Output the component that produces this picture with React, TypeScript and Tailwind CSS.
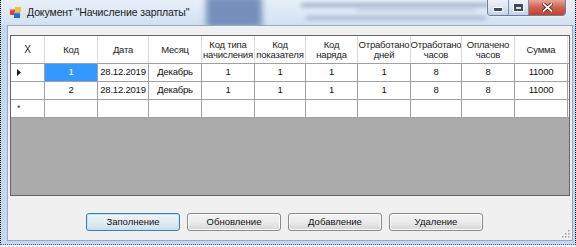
import React from "react";

type Col = { w: number; h: string[]; v: string[] };

const cols: Col[] = [
  { w: 53, h: ["Код"], v: ["1", "2"] },
  { w: 51, h: ["Дата"], v: ["28.12.2019", "28.12.2019"] },
  { w: 53, h: ["Месяц"], v: ["Декабрь", "Декабрь"] },
  { w: 53, h: ["Код типа", "начисления"], v: ["1", "1"] },
  { w: 51, h: ["Код", "показателя"], v: ["1", "1"] },
  { w: 52, h: ["Код", "наряда"], v: ["1", "1"] },
  { w: 53, h: ["Отработано", "дней"], v: ["1", "1"] },
  { w: 51, h: ["Отработано", "часов"], v: ["8", "8"] },
  { w: 53, h: ["Оплачено", "часов"], v: ["8", "8"] },
  { w: 53, h: ["Сумма"], v: ["11000", "11000"] },
];

function FormIcon() {
  return (
    <svg width="11" height="11" viewBox="0 0 11 11">
      <rect x="0" y="2" width="6" height="6" fill="#d9412b" />
      <rect x="0" y="2" width="6" height="1.5" fill="#f08a5b" />
      <rect x="5" y="0" width="6" height="5" fill="#f3c531" />
      <rect x="4" y="5" width="6" height="6" fill="#2f6bc6" />
      <rect x="4" y="5" width="6" height="1.5" fill="#7fb0ee" />
    </svg>
  );
}

function Btn({ label, focused }: { label: string; focused?: boolean }) {
  return (
    <div
      className={
        "w-[94px] h-[18px] rounded-[3px] border flex items-center justify-center text-[9.5px] text-[#111] " +
        (focused
          ? "border-[#3c7fb1] bg-gradient-to-b from-[#eef5fa] via-[#e3ecf3] to-[#cfdde8] shadow-[inset_0_0_0_1px_#bfe3f7]"
          : "border-[#8a8a8a] bg-gradient-to-b from-[#f4f4f4] via-[#ebebeb] to-[#d6d6d6] shadow-[inset_0_0_0_1px_#fbfbfb]")
      }
    >
      {label}
    </div>
  );
}

export default function App() {
  return (
    <div className="w-[576px] h-[247px] overflow-hidden bg-[#eef3f9] font-['Liberation_Sans',Arial,sans-serif]">
      <div className="w-[576px] h-[245px] border-x border-dotted border-black flex flex-col bg-[#c4d8ef] border-b border-b-[#4b6283] relative">
        {/* Title bar */}
        <div className="h-[25px] relative flex items-center pl-[9px] bg-gradient-to-b from-[#e8f0f9] to-[#d2e1f2] overflow-hidden">
          <div className="absolute left-[205px] top-[-4px] w-[56px] h-[32px] bg-[#7490bb] blur-[3px]" />
          <div className="absolute left-[300px] top-[3px] w-[200px] h-[4px] bg-[#8d9fbd] blur-[2px] opacity-80" />
          <div className="absolute left-[305px] top-[16px] w-[180px] h-[4px] bg-[#95a7c4] blur-[2px] opacity-70" />
          <div className="absolute left-[355px] top-[8px] w-[120px] h-[3px] bg-[#a9b8d0] blur-[2px] opacity-60" />
          <div className="relative flex items-center gap-[6px]">
            <FormIcon />
            <span className="text-[10.5px] text-[#1a1a1a] tracking-[-0.1px]">
              Документ "Начисление зарплаты"
            </span>
          </div>
          {/* window controls */}
          <div className="absolute right-[9px] top-0 flex h-[16px] rounded-b-[4px] border border-t-0 border-[#6b7e9c] overflow-hidden shadow-[0_0_2px_#ffffff]">
            <div className="w-[21px] h-full bg-gradient-to-b from-[#eef3fa] via-[#dbe5f2] to-[#c3d3e8] border-r border-[#7f91ad] flex items-end justify-center pb-[3px]">
              <div className="w-[8px] h-[3px] bg-[#3c4a5e] border border-white box-content" />
            </div>
            <div className="w-[20px] h-full bg-gradient-to-b from-[#eef3fa] via-[#dbe5f2] to-[#c3d3e8] border-r border-[#7f91ad] flex items-center justify-center">
              <div className="w-[9px] h-[7px] border-2 border-[#3c4a5e] border-t-[3px] outline outline-1 outline-white" />
            </div>
            <div className="w-[36px] h-full bg-gradient-to-b from-[#e8a596] via-[#d0604e] to-[#c2402e] flex items-center justify-center">
              <svg width="11" height="9" viewBox="0 0 11 9">
                <path d="M1.5 1 L9.5 8 M9.5 1 L1.5 8" stroke="#4a1a14" strokeWidth="3.4" strokeLinecap="square" />
                <path d="M1.5 1 L9.5 8 M9.5 1 L1.5 8" stroke="#ffffff" strokeWidth="1.8" strokeLinecap="square" />
              </svg>
            </div>
          </div>
        </div>

        {/* Client area with frame */}
        <div className="flex-1 flex pl-[6px] pr-[2px] pb-[3px]">
          <div className="flex-1 bg-[#f0f0f0] border border-[#93a8c6] flex flex-col relative">
            {/* Grid */}
            <div className="mt-[9px] mx-[2px] h-[161px] border border-[#646464] bg-[#ababab] overflow-hidden">
              {/* header */}
              <div className="flex h-[28px] bg-white border-b border-[#a0a0a0]">
                <div className="w-[34px] shrink-0 border-r border-[#dcdcdc] flex items-center justify-center text-[10px] text-[#222]">
                  X
                </div>
                {cols.map((c, i) => (
                  <div
                    key={i}
                    style={{ width: c.w }}
                    className="shrink-0 border-r border-[#dcdcdc] flex flex-col items-center justify-center text-[9.5px] leading-[10px] text-[#222] tracking-[-0.2px] whitespace-nowrap overflow-hidden"
                  >
                    {c.h.map((t, j) => (
                      <span key={j}>{t}</span>
                    ))}
                  </div>
                ))}
              </div>
              {/* data rows */}
              {[0, 1].map((r) => (
                <div key={r} className="flex h-[18px] bg-white border-b border-[#a0a0a0]">
                  <div className="w-[34px] shrink-0 border-r border-[#a0a0a0] bg-white flex items-center pl-[6px]">
                    {r === 0 && (
                      <svg width="4" height="7" viewBox="0 0 4 7">
                        <path d="M0 0 L4 3.5 L0 7 Z" fill="#1a1a1a" />
                      </svg>
                    )}
                  </div>
                  {cols.map((c, i) => (
                    <div
                      key={i}
                      style={{ width: c.w }}
                      className={
                        "shrink-0 border-r border-[#a0a0a0] flex items-center justify-center text-[9.5px] tracking-[-0.2px] whitespace-nowrap overflow-hidden " +
                        (r === 0 && i === 0 ? "bg-[#3399ff] text-white" : "text-[#111]")
                      }
                    >
                      {c.v[r]}
                    </div>
                  ))}
                </div>
              ))}
              {/* new row */}
              <div className="flex h-[18px] bg-white border-b border-[#a0a0a0]">
                <div className="w-[34px] shrink-0 border-r border-[#a0a0a0] flex items-center pl-[6px] text-[9px] text-[#333] leading-none">
                  *
                </div>
                {cols.map((c, i) => (
                  <div key={i} style={{ width: c.w }} className="shrink-0 border-r border-[#a0a0a0]" />
                ))}
              </div>
            </div>

            {/* Buttons */}
            <div className="mt-[17px] pl-[78px] flex gap-[7px]">
              <Btn label="Заполнение" focused />
              <Btn label="Обновление" />
              <Btn label="Добавление" />
              <Btn label="Удаление" />
            </div>

            {/* size grip */}
            <svg className="absolute right-[2px] bottom-[2px]" width="9" height="9" viewBox="0 0 9 9">
              {[
                [7, 1],
                [7, 4],
                [4, 4],
                [7, 7],
                [4, 7],
                [1, 7],
              ].map(([x, y], k) => (
                <rect key={k} x={x} y={y} width="1.5" height="1.5" fill="#a0a0a0" />
              ))}
            </svg>
          </div>
        </div>
      </div>
    </div>
  );
}
